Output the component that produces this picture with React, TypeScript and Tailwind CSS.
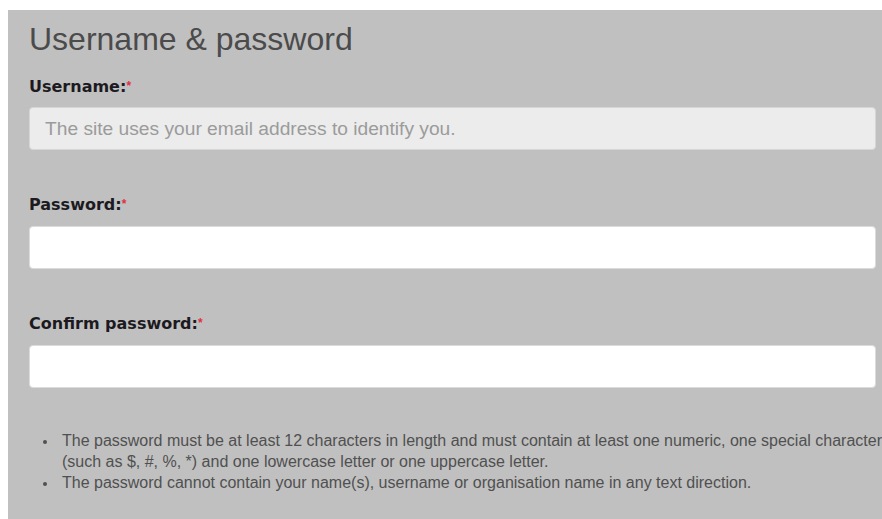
import React from "react";

const sans = { fontFamily: '"Liberation Sans", Arial, sans-serif' };
const labelFont = { fontFamily: '"DejaVu Sans", Verdana, sans-serif' };

function Label({ text }: { text: string }) {
  return (
    <div className="h-[20px] text-[16px] leading-[20px] font-bold text-[#1c1a1f]" style={labelFont}>
      {text}
      <span className="text-[#e0313d] text-[12px] align-top relative -top-[1px]" style={sans}>*</span>
    </div>
  );
}

function Rule({ children }: { children: React.ReactNode }) {
  return (
    <li className="flex">
      <span className="w-[33px] shrink-0 pl-[14px] pt-[10px]">
        <span className="block w-[4px] h-[4px] rounded-full bg-[#505050]" />
      </span>
      <span className="min-w-0">{children}</span>
    </li>
  );
}

export default function App() {
  return (
    <div className="w-[882px] h-[519px] overflow-hidden bg-white pl-2 pt-[10px]">
      <div className="w-[889px] h-full bg-[#c0c0c0] px-[21px] pt-[11px]" style={sans}>
        <h2 className="h-[36px] text-[32px] leading-[36px] text-[#4b4b4b] font-normal">Username &amp; password</h2>

        <div className="mt-[20px]">
          <Label text="Username:" />
          <input
            type="text"
            disabled
            placeholder="The site uses your email address to identify you."
            className="mt-[10px] block w-[847px] h-[43px] rounded-[4px] border border-[#d6d6d6] bg-[#ececec] px-[15px] text-[19.2px] placeholder:text-[#9b9b9b] outline-none"
            style={sans}
          />
        </div>

        <div className="mt-[45px]">
          <Label text="Password:" />
          <input
            type="password"
            className="mt-[11px] block w-[847px] h-[43px] rounded-[4px] border border-[#dcdcdc] bg-white px-[15px] outline-none"
          />
        </div>

        <div className="mt-[45px]">
          <Label text="Confirm password:" />
          <input
            type="password"
            className="mt-[11px] block w-[847px] h-[43px] rounded-[4px] border border-[#dcdcdc] bg-white px-[15px] outline-none"
          />
        </div>

        <ul className="mt-[42px] w-[860px] text-[16px] leading-[21px] text-[#505050]">
          <Rule>
            The password must be at least 12 characters in length and must contain at least one numeric, one special character
            (such as $, #, %, *) and one lowercase letter or one uppercase letter.
          </Rule>
          <Rule>The password cannot contain your name(s), username or organisation name in any text direction.</Rule>
        </ul>
      </div>
    </div>
  );
}
